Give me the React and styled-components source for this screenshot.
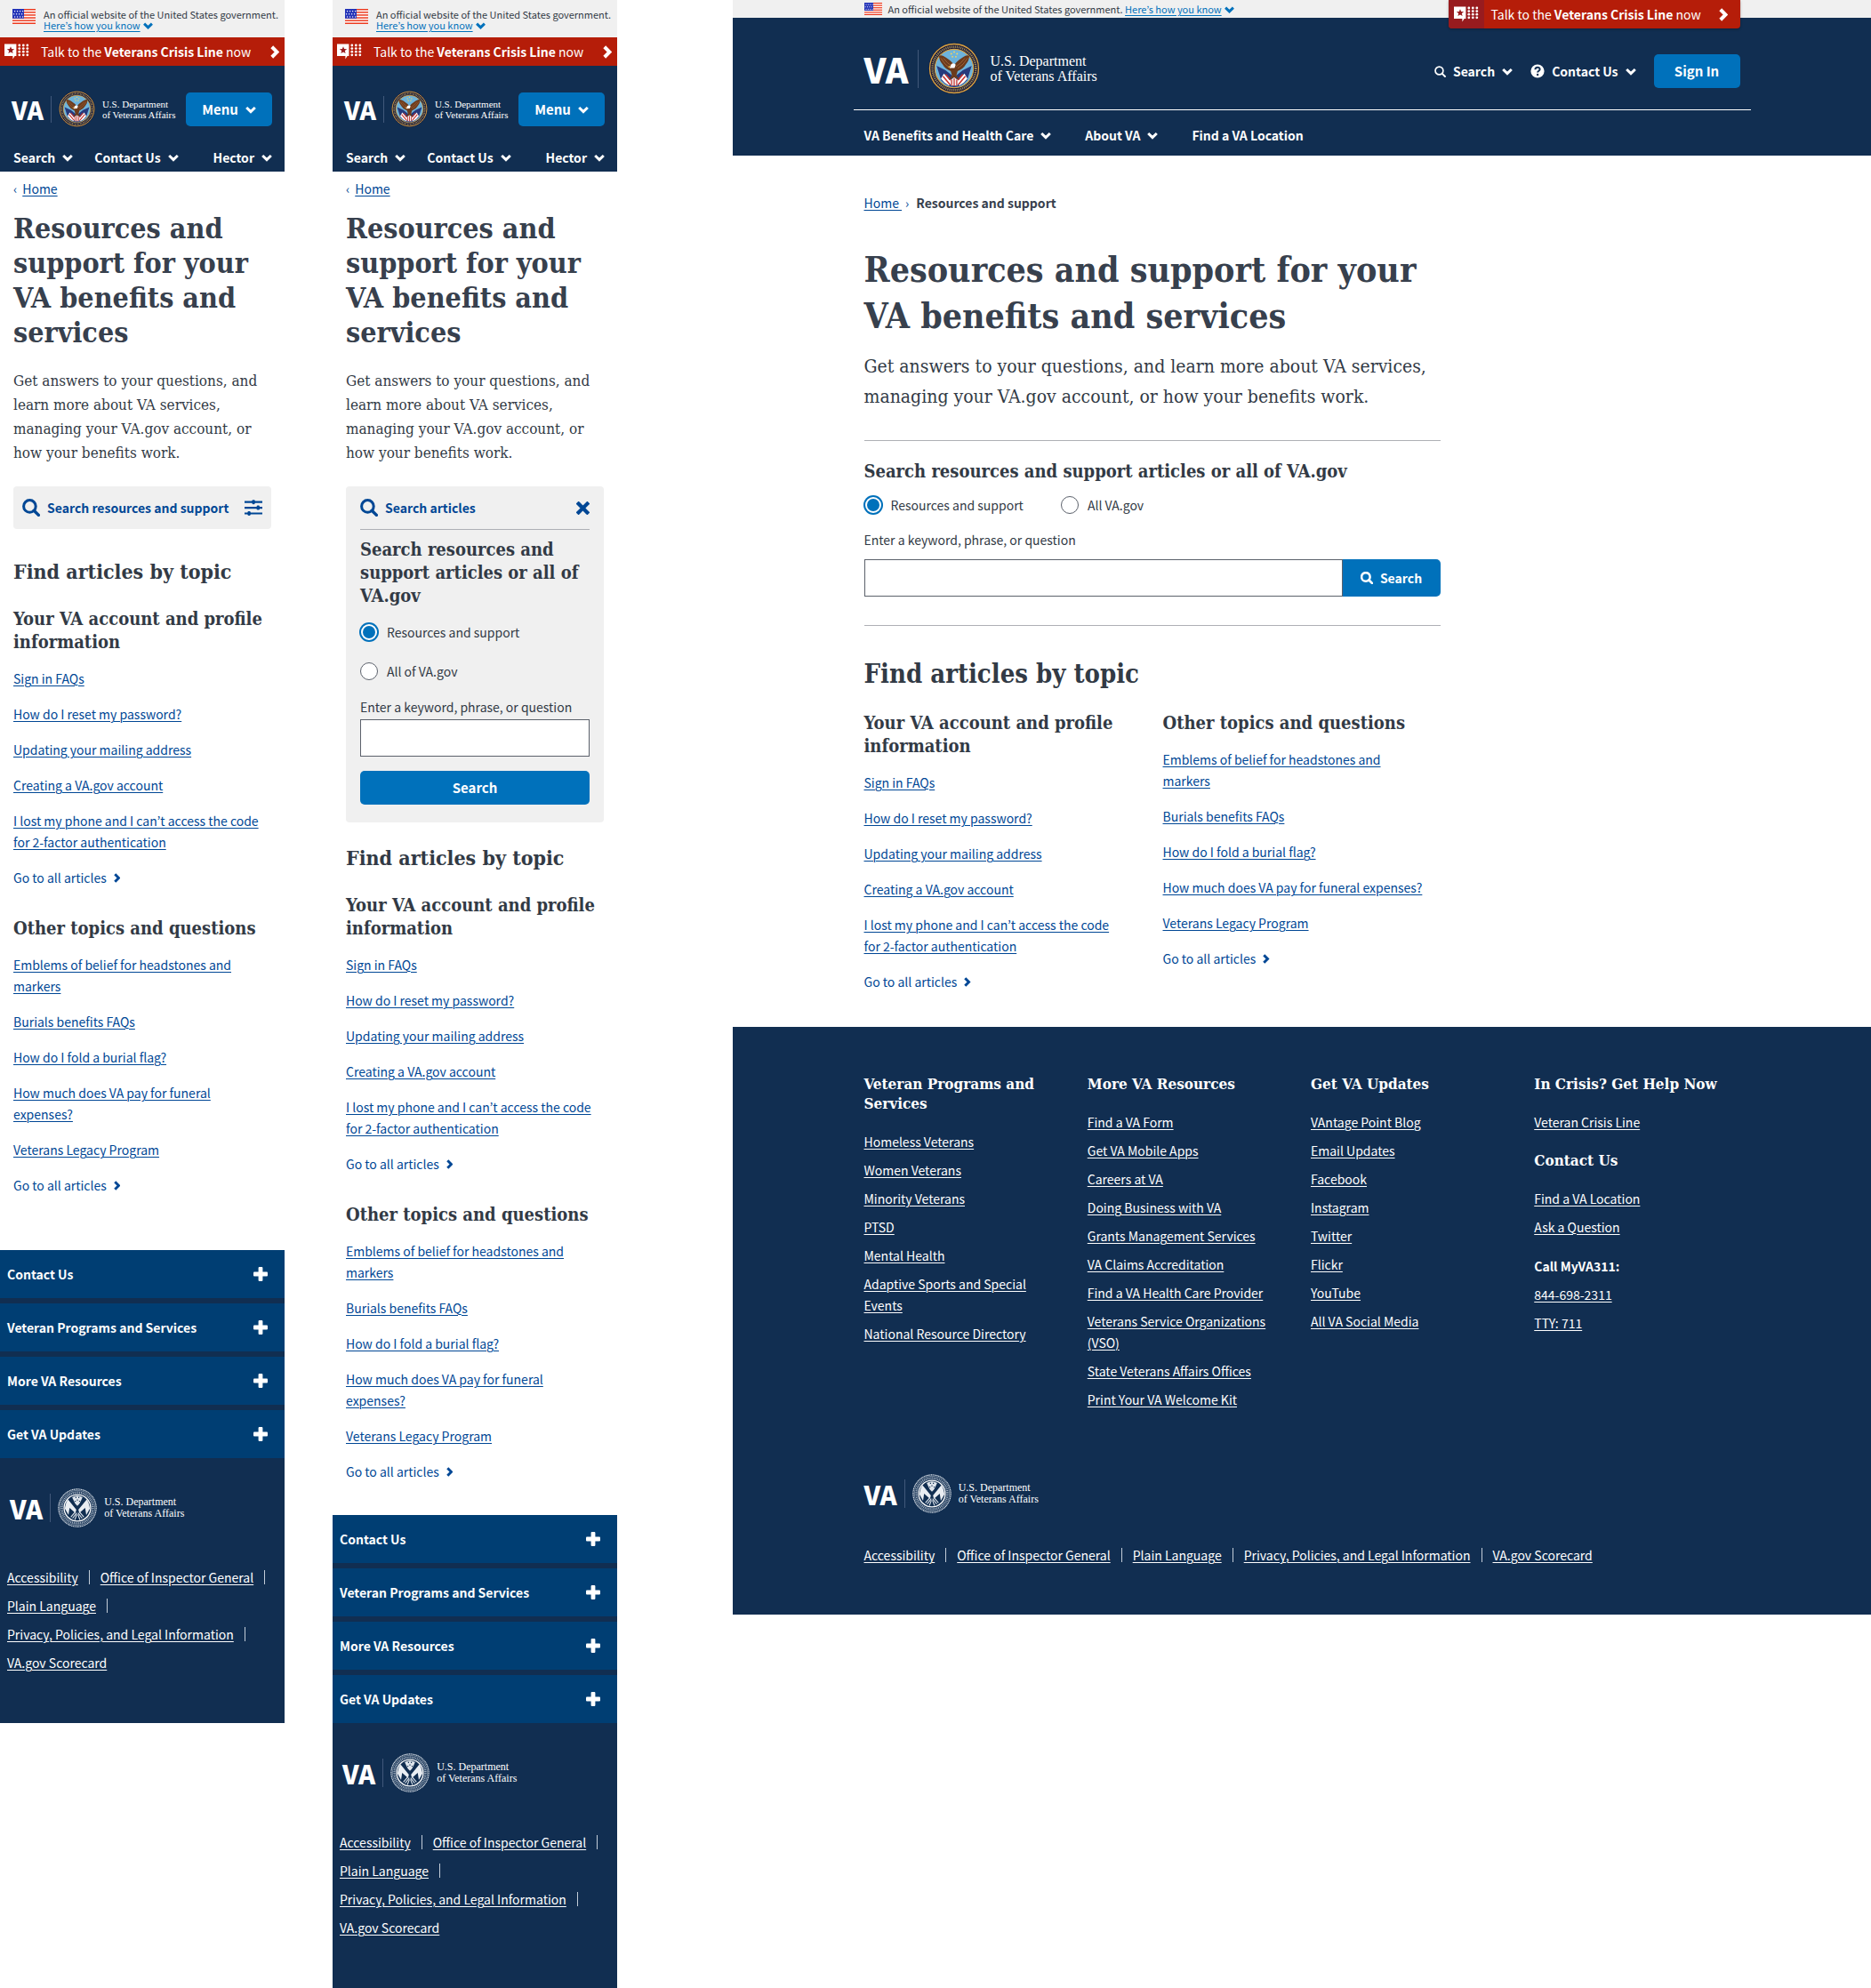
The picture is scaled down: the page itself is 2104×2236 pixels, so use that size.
import React, { useId } from "react";
import styled, { createGlobalStyle, css } from "styled-components";

const color = {
  navy: "#112e51",
  accordion: "#003e73",
  blue: "#0071bb",
  link: "#004795",
  banner: "#f0f0f0",
  crisis: "#b51d09",
  crisisDark: "#981b1e",
  text: "#323a45",
  heading: "#37404d",
  rule: "#aeb0b5",
  field: "#5b616b",
};

const sans = `"Noto Sans CJK KR", "Noto Sans", sans-serif`;
const slab = `"DejaVu Serif Condensed", "DejaVu Serif", serif`;

const GlobalStyle = createGlobalStyle`
  *, *::before, *::after { box-sizing: border-box; }
  body {
    margin: 0;
    background: #fff;
    color: ${color.text};
    font: 14px/24px ${sans};
  }
  h1, h2, h3, p, ul { margin: 0; padding: 0; }
  ul { list-style: none; }
  button { font: inherit; color: inherit; border: 0; padding: 0; background: none; cursor: pointer; }
  svg { display: block; flex: none; }
`;

/* ---------- Icons ---------- */

const ChevronDown = ({ size = 12, weight = 3 }) => (
  <svg width={size} height={size} viewBox="0 0 12 12" aria-hidden="true">
    <path d="M1.2 4 L6 8.6 L10.8 4" fill="none" stroke="currentColor" strokeWidth={weight} />
  </svg>
);

const ChevronRight = ({ size = 12 }) => (
  <svg width={(size * 8) / 12} height={size} viewBox="0 0 8 12" aria-hidden="true">
    <path d="M1.4 1.4 L6 6 L1.4 10.6" fill="none" stroke="currentColor" strokeWidth="3.2" />
  </svg>
);

const SearchIcon = ({ size = 20, weight = 3 }) => (
  <svg width={size} height={size} viewBox="0 0 20 20" aria-hidden="true">
    <circle cx="8.4" cy="8.4" r="6.8" fill="none" stroke="currentColor" strokeWidth={weight} />
    <path d="M13.2 13.2 L18.4 18.4" stroke="currentColor" strokeWidth={weight + 0.4} strokeLinecap="round" />
  </svg>
);

const QuestionIcon = () => (
  <svg width="16" height="16" viewBox="0 0 16 16" aria-hidden="true">
    <circle cx="8" cy="8" r="7.6" fill="#fff" />
    <path d="M5.4 6.2 C5.5 3 10.6 3 10.6 6 C10.6 7.8 8.1 7.7 8.1 9.6" fill="none" stroke={color.navy} strokeWidth="2" />
    <circle cx="8.1" cy="12" r="1.2" fill={color.navy} />
  </svg>
);

const SlidersIcon = () => (
  <svg width="20" height="20" viewBox="0 0 20 20" aria-hidden="true" fill="currentColor">
    <path d="M0 2.6h20v2.2H0zM0 9h20v2.2H0zM0 15.4h20v2.2H0z" />
    <rect x="8.4" y="1.2" width="3.4" height="5" rx="1.4" />
    <rect x="13.6" y="7.6" width="3.4" height="5" rx="1.4" />
    <rect x="3.4" y="14" width="3.4" height="5" rx="1.4" />
  </svg>
);

const CloseIcon = () => (
  <svg width="15" height="15" viewBox="0 0 15 15" aria-hidden="true">
    <path d="M2.6 2.6 L12.4 12.4 M12.4 2.6 L2.6 12.4" stroke="currentColor" strokeWidth="4.2" strokeLinecap="square" />
  </svg>
);

const PlusIcon = () => (
  <svg width="16" height="16" viewBox="0 0 16 16" aria-hidden="true" fill="#fff">
    <rect x="5.6" y="0" width="4.8" height="16" rx="1" />
    <rect x="0" y="5.6" width="16" height="4.8" rx="1" />
  </svg>
);

const Flag = ({ width = 26, height = 17 }) => (
  <svg width={width} height={height} viewBox="0 0 26 17" preserveAspectRatio="none" aria-hidden="true">
    <rect width="26" height="17" fill="#fff" />
    {[0, 3.1, 6.2, 9.3, 12.4, 15.5].map((y) => (
      <rect key={y} y={y} width="26" height="1.5" fill="#ec3b20" />
    ))}
    <rect width="13" height="10.8" fill="#2434b8" />
    {[2, 5.2, 8.4].map((y, row) =>
      [2, 5, 8, 11].map((x) => (
        <rect key={`${x}-${y}`} x={row % 2 ? x - 1 : x} y={y} width="1.2" height="1.2" fill="#fff" />
      ))
    )}
  </svg>
);

const CrisisIcon = () => (
  <svg width="28" height="18" viewBox="0 0 28 18" aria-hidden="true" fill="#fff">
    <path d="M1 0.5h12.4v13.6H11.6L9.4 17.6V14.1H0V0.5z" />
    <path
      d="M7 3.2 L8.1 6.1 L11.2 6.2 L8.8 8.1 L9.6 11.1 L7 9.4 L4.4 11.1 L5.2 8.1 L2.8 6.2 L5.9 6.1z"
      fill={color.crisisDark}
    />
    {[2, 5.6, 9.2, 12.8].map((y) =>
      [16.8, 21.3, 25.8].map((x) => <circle key={`${x}-${y}`} cx={x} cy={y} r="1.4" />)
    )}
  </svg>
);

const Seal = ({ size }) => (
  <svg width={size} height={size} viewBox="0 0 60 60" aria-hidden="true">
    <circle cx="30" cy="30" r="29.6" fill="#1c1a3c" />
    <circle cx="30" cy="30" r="28.4" fill="none" stroke="#d9a441" strokeWidth="1.4" />
    <circle cx="30" cy="30" r="25.2" fill="none" stroke="#c9b25c" strokeWidth="2.6" strokeDasharray="1.2 1" opacity="0.75" />
    <circle cx="30" cy="30" r="22.4" fill="#6db3dc" stroke="#d9a441" strokeWidth="1.2" />
    <path d="M9.6 27 L15 44 Q22 51.5 30 51.8 Q38 51.5 45 44 L50.4 27 L40 32 L30 40 L20 32z" fill="#263a7c" />
    <path d="M18 36 L27 46 L24 50 Q18 47 14.6 42z M42 36 L33 46 L36 50 Q42 47 45.4 42z" fill="#fff" />
    <path d="M17 39 L25 48.6 M20 36.6 L27.5 45.5 M43 39 L35 48.6 M40 36.6 L32.5 45.5" stroke="#c8322e" strokeWidth="1.6" />
    <path
      d="M30 26 Q27 21.4 20 17 Q15 13.6 12.4 15.4 Q12.6 20.6 16.2 24.8 Q19.4 30.6 26 33 L27.4 38 L24 43 L30 40.6 L36 43 L32.6 38 L34 33 Q40.6 30.6 43.8 24.8 Q47.4 20.6 47.6 15.4 Q45 13.6 40 17 Q33 21.4 30 26z"
      fill="#6b3a1c"
    />
    <path d="M14.5 18 Q19 26 26 30 M17.4 18 Q22 24 28 28 M45.5 18 Q41 26 34 30 M42.6 18 Q38 24 32 28" fill="none" stroke="#a5683a" strokeWidth="0.9" />
    <path d="M26.4 25.4 Q29 22.6 31.8 25.6 L30.4 29.4 L24.6 29.6z" fill="#fff" />
    <path d="M24.8 26.6 L22.4 28.6 L25.4 28.4z" fill="#f0b93a" />
    <path d="M25 44 L30 40.4 L35 44 L34 50 L26 50z" fill="#f3f3f3" />
    <path d="M27 43 V50 M30 41.6 V50.6 M33 43 V50" stroke="#c8322e" strokeWidth="1.3" />
    {[[30, 10.8], [26.6, 13], [33.4, 13], [28, 16.4], [32, 16.4]].map(([x, y]) => (
      <circle key={`${x}-${y}`} cx={x} cy={y} r="1" fill="#f4d35e" />
    ))}
  </svg>
);

const MonoSeal = ({ size }) => (
  <svg width={size} height={size} viewBox="0 0 60 60" aria-hidden="true">
    <circle cx="30" cy="30" r="28.8" fill="none" stroke="#dfe5ec" strokeWidth="1.6" strokeDasharray="1.6 0.7" />
    <circle cx="30" cy="30" r="26.8" fill="none" stroke="#c8d1dc" strokeWidth="0.7" />
    <circle cx="30" cy="30" r="23.8" fill="none" stroke="#c3cdd9" strokeWidth="3.4" strokeDasharray="1.5 1.1" opacity="0.8" />
    <circle cx="30" cy="30" r="20.4" fill="none" stroke="#fff" strokeWidth="1.8" />
    <path d="M10.8 31 Q12 22 15.6 17 L28.4 32.6 L27 38 L18 30 L16.4 41z" fill="#e9edf2" />
    <path d="M49.2 31 Q48 22 44.4 17 L31.6 32.6 L33 38 L42 30 L43.6 41z" fill="#e9edf2" />
    <path d="M22 13.6 Q30 8.6 38 13.6 L35 20 L33 24 L30 27 L27 24 L25 20z" fill="#dfe5ec" />
    <path d="M27 13.4h1.6v1.6H27z M31.4 13.4H33v1.6h-1.6z M29.2 17h1.6v1.6h-1.6z M26 19h1.6v1.6H26z M32.6 19h1.6v1.6h-1.6z" fill={color.navy} />
    <path d="M20 44 L27 36 M22.6 46 L29 37.6 M40 44 L33 36 M37.4 46 L31 37.6 M26 48.4 L29.2 40 M34 48.4 L30.8 40" stroke="#dfe5ec" strokeWidth="1.5" />
  </svg>
);

/* ---------- Logo ---------- */

const logoSizes = {
  small: { mark: 28, seal: 41, text: 11, line: 12, gap: 8, bar: 30 },
  footer: { mark: 29, seal: 44, text: 12, line: 13, gap: 8, bar: 32 },
  large: { mark: 39, seal: 58, text: 16, line: 17, gap: 11, bar: 43 },
};

const LogoLink = styled.a`
  display: inline-flex;
  align-items: center;
  gap: ${(p) => p.$s.gap}px;
  color: #fff;
  text-decoration: none;
`;
const LogoMark = styled.span`
  font: 900 ${(p) => p.$s.mark}px/1 ${sans};
`;
const LogoBar = styled.span`
  width: 1px;
  height: ${(p) => p.$s.bar}px;
  background: #41587a;
`;
const LogoText = styled.span`
  font: ${(p) => p.$s.text}px/${(p) => p.$s.line}px "Liberation Serif", serif;
  white-space: nowrap;
`;

const Logo = ({ size, mono }) => {
  const s = logoSizes[size];
  return (
    <LogoLink $s={s} href="#home">
      <LogoMark $s={s}>VA</LogoMark>
      <LogoBar $s={s} />
      {mono ? <MonoSeal size={s.seal} /> : <Seal size={s.seal} />}
      <LogoText $s={s}>
        U.S. Department
        <br />
        of Veterans Affairs
      </LogoText>
    </LogoLink>
  );
};

/* ---------- Shared pieces ---------- */

const linkLine = css`
  text-decoration: underline;
  text-decoration-thickness: 1px;
  text-underline-offset: 2px;
`;
const TextLink = styled.a`
  color: ${color.link};
  ${linkLine}
`;
const MoreLink = styled.a`
  display: inline-flex;
  align-items: center;
  gap: 8px;
  color: ${color.link};
  text-decoration: none;
`;
const NavButton = styled.button`
  display: inline-flex;
  align-items: center;
  gap: 8px;
  color: #fff;
  font-weight: 700;
  white-space: nowrap;
`;
const PrimaryButton = styled.button`
  display: flex;
  align-items: center;
  justify-content: center;
  gap: 8px;
  width: ${(p) => (p.$block ? "100%" : "97px")};
  height: 38px;
  border-radius: 5px;
  background: ${color.blue};
  color: #fff;
  font-size: 15px;
  font-weight: 700;
`;
const Title = styled.h1`
  color: ${color.heading};
  font: 700 ${(p) => (p.$wide ? "39px/52px" : "32px/39px")} ${slab};
  margin-top: ${(p) => (p.$wide ? 37 : 14)}px;
`;
const Intro = styled.p`
  font: ${(p) => (p.$wide ? "21px/34px" : "17px/27px")} ${slab};
  margin-top: ${(p) => (p.$wide ? 14 : 21)}px;
`;
const SectionTitle = styled.h2`
  font: 700 ${(p) => (p.$wide ? "29px/38px" : "23px/30px")} ${slab};
`;
const TopicTitle = styled.h3`
  font: 700 20px/26px ${slab};
`;

/* ---------- Government banner and crisis line ---------- */

const BannerText = styled.p`
  font-size: 11px;
  line-height: ${(p) => (p.$wide ? 20 : 12)}px;
  white-space: nowrap;
`;
const BannerButton = styled.button`
  display: inline-flex;
  align-items: center;
  gap: 3px;
  color: ${color.blue};
  span {
    text-decoration: underline;
    text-underline-offset: 2px;
  }
`;
const KnowButton = () => (
  <BannerButton type="button">
    <span>Here’s how you know</span>
    <ChevronDown size={11} weight={3.2} />
  </BannerButton>
);
const SmallBanner = styled.div`
  display: flex;
  align-items: flex-start;
  gap: 9px;
  padding: 10px 0 8px 14px;
  background: ${color.banner};
`;
const CrisisBar = styled.a`
  display: flex;
  align-items: center;
  height: 32px;
  padding: 0 6px 0 5px;
  gap: 13px;
  background: ${color.crisis};
  color: #fff;
  text-decoration: none;
  white-space: nowrap;
  > svg:last-child {
    margin-left: auto;
  }
`;
const CrisisTab = styled(CrisisBar)`
  position: absolute;
  top: 0;
  right: 12px;
  width: 328px;
  gap: 8px;
  padding: 0 14px 0 0;
  border-radius: 0 0 4px 4px;
  box-shadow: 0 1px 3px rgba(0, 0, 0, 0.3);
  overflow: hidden;
`;
const CrisisBadge = styled.span`
  display: flex;
  align-items: center;
  justify-content: center;
  width: 40px;
  height: 32px;
  background: ${color.crisisDark};
`;
const CrisisText = () => (
  <span>
    Talk to the <b>Veterans Crisis Line</b> now
  </span>
);

/* ---------- Topics ---------- */

const topics = [
  {
    title: "Your VA account and profile information",
    links: [
      "Sign in FAQs",
      "How do I reset my password?",
      "Updating your mailing address",
      "Creating a VA.gov account",
      "I lost my phone and I can’t access the code for 2-factor authentication",
    ],
  },
  {
    title: "Other topics and questions",
    links: [
      "Emblems of belief for headstones and markers",
      "Burials benefits FAQs",
      "How do I fold a burial flag?",
      "How much does VA pay for funeral expenses?",
      "Veterans Legacy Program",
    ],
  },
];

const TopicGrid = styled.div`
  display: grid;
  grid-template-columns: repeat(${(p) => (p.$wide ? 2 : 1)}, minmax(0, 1fr));
  gap: ${(p) => (p.$wide ? 42 : 32)}px;
  margin-top: ${(p) => (p.$wide ? 23 : 25)}px;
  padding-right: ${(p) => (p.$wide ? 18 : 0)}px;
`;
const TopicList = styled.ul`
  display: grid;
  gap: 16px;
  margin-top: 16px;
`;
const Topics = ({ wide }) => (
  <TopicGrid $wide={wide}>
    {topics.map((topic) => (
      <section key={topic.title}>
        <TopicTitle>{topic.title}</TopicTitle>
        <TopicList>
          {topic.links.map((text) => (
            <li key={text}>
              <TextLink href="#article">{text}</TextLink>
            </li>
          ))}
          <li>
            <MoreLink href="#all">
              Go to all articles <ChevronRight size={11} />
            </MoreLink>
          </li>
        </TopicList>
      </section>
    ))}
  </TopicGrid>
);

/* ---------- Search form ---------- */

const RadioGroup = styled.div`
  display: flex;
  flex-direction: ${(p) => (p.$wide ? "row" : "column")};
  gap: ${(p) => (p.$wide ? 42 : 20)}px;
  margin-top: ${(p) => (p.$wide ? 13 : 16)}px;
`;
const RadioLabel = styled.label`
  display: flex;
  align-items: center;
  gap: 10px;
`;
const Radio = styled.input.attrs({ type: "radio" })`
  appearance: none;
  flex: none;
  width: 20px;
  height: 20px;
  margin: 0;
  border: 1px solid ${color.field};
  border-radius: 50%;
  background: #fff;
  &:checked {
    width: 14px;
    height: 14px;
    margin: 0 3px;
    border: 0;
    background: ${color.blue};
    box-shadow: 0 0 0 2px #fff, 0 0 0 4px ${color.blue};
  }
`;
const FieldLabel = styled.label`
  display: block;
  margin-top: ${(p) => (p.$wide ? 15 : 16)}px;
`;
const FieldRow = styled.div`
  display: flex;
  flex-direction: ${(p) => (p.$wide ? "row" : "column")};
  gap: ${(p) => (p.$wide ? 0 : 16)}px;
  margin-top: ${(p) => (p.$wide ? 10 : 2)}px;
`;
const Field = styled.input.attrs({ type: "text" })`
  flex: 1 1 auto;
  min-width: 0;
  min-height: 42px;
  padding: 0 10px;
  border: 1px solid ${color.field};
  border-radius: 0;
  background: #fff;
  font: inherit;
`;
const AttachedButton = styled(PrimaryButton)`
  width: 110px;
  height: 42px;
  border-radius: 0 5px 5px 0;
  font-size: 14px;
`;

const SearchFields = ({ wide }) => {
  const id = useId();
  return (
    <>
      <TopicTitle>Search resources and support articles or all of VA.gov</TopicTitle>
      <RadioGroup $wide={wide}>
        <RadioLabel>
          <Radio name={`${id}-scope`} defaultChecked />
          Resources and support
        </RadioLabel>
        <RadioLabel>
          <Radio name={`${id}-scope`} />
          {wide ? "All VA.gov" : "All of VA.gov"}
        </RadioLabel>
      </RadioGroup>
      <FieldLabel $wide={wide} htmlFor={`${id}-q`}>
        Enter a keyword, phrase, or question
      </FieldLabel>
      <FieldRow $wide={wide}>
        <Field id={`${id}-q`} />
        {wide ? (
          <AttachedButton type="button">
            <SearchIcon size={14} weight={3.6} /> Search
          </AttachedButton>
        ) : (
          <PrimaryButton type="button" $block>
            Search
          </PrimaryButton>
        )}
      </FieldRow>
    </>
  );
};

const ClosedPanel = styled.button`
  display: flex;
  align-items: center;
  gap: 8px;
  width: 100%;
  height: 48px;
  margin-top: 24px;
  padding: 0 10px;
  border-radius: 4px;
  background: ${color.banner};
  color: ${color.link};
  font-weight: 700;
  > svg:last-child {
    margin-left: auto;
  }
`;
const OpenPanel = styled.form`
  margin-top: 24px;
  padding: 12px 16px 20px;
  border-radius: 4px;
  background: ${color.banner};
`;
const PanelHead = styled.div`
  display: flex;
  align-items: center;
  gap: 8px;
  margin-bottom: 9px;
  padding-bottom: 12px;
  border-bottom: 1px solid ${color.rule};
  color: ${color.link};
  font-weight: 700;
  button {
    margin-left: auto;
  }
`;
const SearchBand = styled.form`
  margin-top: 32px;
  padding: 21px 0 32px;
  border: solid ${color.rule};
  border-width: 1px 0;
`;

/* ---------- Footer data ---------- */

const footerColumns = [
  [
    {
      title: "Veteran Programs and Services",
      links: [
        "Homeless Veterans",
        "Women Veterans",
        "Minority Veterans",
        "PTSD",
        "Mental Health",
        "Adaptive Sports and Special Events",
        "National Resource Directory",
      ],
    },
  ],
  [
    {
      title: "More VA Resources",
      links: [
        "Find a VA Form",
        "Get VA Mobile Apps",
        "Careers at VA",
        "Doing Business with VA",
        "Grants Management Services",
        "VA Claims Accreditation",
        "Find a VA Health Care Provider",
        "Veterans Service Organizations (VSO)",
        "State Veterans Affairs Offices",
        "Print Your VA Welcome Kit",
      ],
    },
  ],
  [
    {
      title: "Get VA Updates",
      links: [
        "VAntage Point Blog",
        "Email Updates",
        "Facebook",
        "Instagram",
        "Twitter",
        "Flickr",
        "YouTube",
        "All VA Social Media",
      ],
    },
  ],
  [
    { title: "In Crisis? Get Help Now", links: ["Veteran Crisis Line"] },
    { title: "Contact Us", links: ["Find a VA Location", "Ask a Question"] },
    { label: "Call MyVA311:", links: ["844-698-2311", "TTY: 711"] },
  ],
];
const accordions = ["Contact Us", "Veteran Programs and Services", "More VA Resources", "Get VA Updates"];
const legal = [
  "Accessibility",
  "Office of Inspector General",
  "Plain Language",
  "Privacy, Policies, and Legal Information",
  "VA.gov Scorecard",
];

const LightLink = styled.a`
  color: #fff;
  ${linkLine}
`;
const LegalList = styled.ul`
  display: flex;
  flex-wrap: wrap;
  gap: 8px 12px;
`;
const LegalItem = styled.li`
  display: flex;
  align-items: center;
  gap: 12px;
  white-space: nowrap;
  &:not(:last-child)::after {
    content: "";
    width: 1px;
    height: 16px;
    background: #c3cdd9;
  }
`;
const Legal = () => (
  <LegalList>
    {legal.map((text) => (
      <LegalItem key={text}>
        <LightLink href="#legal">{text}</LightLink>
      </LegalItem>
    ))}
  </LegalList>
);

/* ---------- Small-screen page ---------- */

const SmallPage = styled.div`
  display: flex;
  flex-direction: column;
`;
const SmallHeader = styled.header`
  padding: 28px 0 4px;
  background: ${color.navy};
`;
const SmallBrand = styled.div`
  display: flex;
  align-items: center;
  justify-content: space-between;
  padding: 0 14px 0 13px;
`;
const SmallNav = styled.nav`
  display: flex;
  gap: 24px;
  margin-top: 22px;
  padding: 0 14px 0 15px;
  button:last-child {
    margin-left: auto;
  }
`;
const SmallMain = styled.main`
  padding: 7px 15px ${(p) => (p.$open ? 37 : 61)}px;
  ${SectionTitle} {
    margin-top: ${(p) => (p.$open ? 25 : 33)}px;
  }
`;
const BackLink = styled.nav`
  display: flex;
  gap: 6px;
  color: ${color.link};
`;
const SmallFooter = styled.footer`
  background: ${color.navy};
  color: #fff;
`;
const Accordion = styled.ul`
  display: grid;
  gap: 6px;
`;
const AccordionButton = styled.button`
  display: flex;
  align-items: center;
  justify-content: space-between;
  width: 100%;
  height: 54px;
  padding: 0 19px 0 8px;
  background: ${color.accordion};
  font-weight: 700;
`;
const SmallFooterBody = styled.div`
  display: grid;
  justify-items: start;
  gap: 44px;
  padding: 34px 8px 56px;
`;
const FooterBrand = styled.div`
  display: flex;
  padding-left: 3px;
`;

const MobileScreen = ({ open }) => (
  <SmallPage>
    <SmallBanner>
      <Flag />
      <BannerText>
        An official website of the United States government.
        <br />
        <KnowButton />
      </BannerText>
    </SmallBanner>
    <CrisisBar href="#crisis">
      <CrisisIcon />
      <CrisisText />
      <ChevronRight size={15} />
    </CrisisBar>
    <SmallHeader>
      <SmallBrand>
        <Logo size="small" />
        <PrimaryButton type="button">
          Menu <ChevronDown />
        </PrimaryButton>
      </SmallBrand>
      <SmallNav>
        {["Search", "Contact Us", "Hector"].map((text) => (
          <NavButton key={text} type="button">
            {text} <ChevronDown />
          </NavButton>
        ))}
      </SmallNav>
    </SmallHeader>
    <SmallMain $open={open}>
      <BackLink>
        ‹ <TextLink href="#home">Home</TextLink>
      </BackLink>
      <Title>Resources and support for your VA benefits and services</Title>
      <Intro>
        Get answers to your questions, and learn more about VA services, managing your VA.gov account, or how your
        benefits work.
      </Intro>
      {open ? (
        <OpenPanel>
          <PanelHead>
            <SearchIcon /> Search articles
            <button type="button" aria-label="Close search">
              <CloseIcon />
            </button>
          </PanelHead>
          <SearchFields />
        </OpenPanel>
      ) : (
        <ClosedPanel type="button">
          <SearchIcon /> Search resources and support <SlidersIcon />
        </ClosedPanel>
      )}
      <SectionTitle>Find articles by topic</SectionTitle>
      <Topics />
    </SmallMain>
    <SmallFooter>
      <Accordion>
        {accordions.map((text) => (
          <li key={text}>
            <AccordionButton type="button">
              {text} <PlusIcon />
            </AccordionButton>
          </li>
        ))}
      </Accordion>
      <SmallFooterBody>
        <FooterBrand>
          <Logo size="footer" mono />
        </FooterBrand>
        <Legal />
      </SmallFooterBody>
    </SmallFooter>
  </SmallPage>
);

/* ---------- Large-screen page ---------- */

const LargePage = styled.div`
  margin-left: 76px;
`;
const Container = styled.div`
  position: relative;
  max-width: 1009px;
  margin: 0 auto;
  padding: 0 12px;
`;
const LargeBanner = styled.div`
  background: ${color.banner};
`;
const LargeBannerRow = styled.div`
  display: flex;
  align-items: center;
  gap: 7px;
`;
const LargeHeader = styled.header`
  background: ${color.navy};
  color: #fff;
`;
const BrandRow = styled(Container)`
  display: flex;
  align-items: center;
  justify-content: space-between;
  padding: 28px 12px 17px;
  border-bottom: 1px solid #fff;
`;
const Actions = styled.div`
  display: flex;
  align-items: center;
  gap: 20px;
  padding-top: 6px;
`;
const MainNav = styled.nav`
  display: flex;
  gap: 38px;
  padding: 16px 0 11px;
`;
const NavLink = styled.a`
  color: #fff;
  font-weight: 700;
  text-decoration: none;
`;
const LargeMain = styled.main`
  max-width: 648px;
  padding: 41px 0 39px;
  ${SectionTitle} {
    margin-top: 35px;
  }
`;
const Crumbs = styled.nav`
  display: flex;
  gap: 4px;
  color: ${color.link};
  b {
    margin-left: 4px;
    color: ${color.heading};
  }
`;
const LargeFooter = styled.footer`
  padding: 53px 0 55px;
  background: ${color.navy};
  color: #fff;
`;
const FooterGrid = styled.div`
  display: grid;
  grid-template-columns: repeat(4, minmax(0, 1fr));
  column-gap: 20px;
  margin-bottom: 72px;
`;
const FooterColumn = styled.div`
  display: grid;
  align-content: start;
  gap: 20px;
  padding-right: 16px;
`;
const FooterTitle = styled.h2`
  margin-bottom: 20px;
  font: 700 17px/22px ${slab};
`;
const FooterLabel = styled.p`
  margin-bottom: 8px;
  font-weight: 700;
`;
const FooterLinks = styled.ul`
  display: grid;
  gap: 8px;
`;
const LegalBlock = styled.div`
  display: grid;
  justify-items: start;
  gap: 35px;
`;

const DesktopScreen = () => (
  <LargePage>
    <LargeBanner>
      <Container>
        <LargeBannerRow>
          <Flag width={20} height={14} />
          <BannerText $wide>
            An official website of the United States government. <KnowButton />
          </BannerText>
        </LargeBannerRow>
        <CrisisTab href="#crisis">
          <CrisisBadge>
            <CrisisIcon />
          </CrisisBadge>
          <CrisisText />
          <ChevronRight size={15} />
        </CrisisTab>
      </Container>
    </LargeBanner>
    <LargeHeader>
      <BrandRow>
        <Logo size="large" />
        <Actions>
          <NavButton type="button">
            <SearchIcon size={13} weight={2.6} /> Search <ChevronDown />
          </NavButton>
          <NavButton type="button">
            <QuestionIcon /> Contact Us <ChevronDown />
          </NavButton>
          <PrimaryButton type="button">Sign In</PrimaryButton>
        </Actions>
      </BrandRow>
      <Container>
        <MainNav>
          <NavButton type="button">
            VA Benefits and Health Care <ChevronDown />
          </NavButton>
          <NavButton type="button">
            About VA <ChevronDown />
          </NavButton>
          <NavLink href="#locations">Find a VA Location</NavLink>
        </MainNav>
      </Container>
    </LargeHeader>
    <Container>
      <LargeMain>
        <Crumbs>
          <TextLink href="#home">Home&nbsp;</TextLink>›<b>Resources and support</b>
        </Crumbs>
        <Title $wide>Resources and support for your VA benefits and services</Title>
        <Intro $wide>
          Get answers to your questions, and learn more about VA services, managing your VA.gov account, or how your
          benefits work.
        </Intro>
        <SearchBand>
          <SearchFields wide />
        </SearchBand>
        <SectionTitle $wide>Find articles by topic</SectionTitle>
        <Topics wide />
      </LargeMain>
    </Container>
    <LargeFooter>
      <Container>
        <FooterGrid>
          {footerColumns.map((groups, i) => (
            <FooterColumn key={i}>
              {groups.map((group) => (
                <section key={group.title || group.label}>
                  {group.title ? (
                    <FooterTitle>{group.title}</FooterTitle>
                  ) : (
                    <FooterLabel>{group.label}</FooterLabel>
                  )}
                  <FooterLinks>
                    {group.links.map((text) => (
                      <li key={text}>
                        <LightLink href="#footer">{text}</LightLink>
                      </li>
                    ))}
                  </FooterLinks>
                </section>
              ))}
            </FooterColumn>
          ))}
        </FooterGrid>
        <LegalBlock>
          <Logo size="footer" mono />
          <Legal />
        </LegalBlock>
      </Container>
    </LargeFooter>
  </LargePage>
);

const Boards = styled.div`
  display: grid;
  grid-template-columns: 320px 320px minmax(0, 1fr);
  align-items: start;
  column-gap: 54px;
`;

export default function App() {
  return (
    <>
      <GlobalStyle />
      <Boards>
        <MobileScreen />
        <MobileScreen open />
        <DesktopScreen />
      </Boards>
    </>
  );
}
